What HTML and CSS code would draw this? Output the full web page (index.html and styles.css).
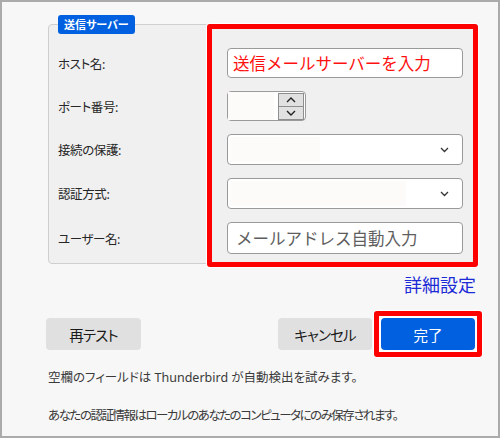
FILE: index.html
```html
<!DOCTYPE html>
<html lang="ja">
<head>
<meta charset="utf-8">
<title>送信サーバー</title>
<link rel="stylesheet" href="styles.css">
</head>
<body>
<div class="frame">
  <div class="group">
    <div class="legend">送信サーバー</div>
    <div class="rows">
      <label class="lbl">ホスト名:</label>
      <input class="field host" type="text" value="送信メールサーバーを入力">

      <label class="lbl">ポート番号:</label>
      <div class="port">
        <span class="blank port-blank"></span>
        <span class="fill"></span>
        <span class="spin">
          <span class="spin-btn"><svg width="10" height="6" viewBox="0 0 10 6"><path d="M1 5 L5 1 L9 5" fill="none" stroke="#222" stroke-width="1.4"/></svg></span>
          <span class="spin-btn"><svg width="10" height="6" viewBox="0 0 10 6"><path d="M1 1 L5 5 L9 1" fill="none" stroke="#222" stroke-width="1.4"/></svg></span>
        </span>
      </div>

      <label class="lbl">接続の保護:</label>
      <div class="select">
        <span class="blank sel-blank-1"></span>
        <svg class="chev" width="9" height="6" viewBox="0 0 9 6"><path d="M1 1 L4.5 4.5 L8 1" fill="none" stroke="#333" stroke-width="1.3"/></svg>
      </div>

      <label class="lbl">認証方式:</label>
      <div class="select">
        <span class="blank sel-blank-2"></span>
        <svg class="chev" width="9" height="6" viewBox="0 0 9 6"><path d="M1 1 L4.5 4.5 L8 1" fill="none" stroke="#333" stroke-width="1.3"/></svg>
      </div>

      <label class="lbl">ユーザー名:</label>
      <input class="field user" type="text" placeholder="メールアドレス自動入力">
    </div>
  </div>

  <div class="advanced">詳細設定</div>

  <div class="buttons">
    <button class="btn">再テスト</button>
    <span class="spacer"></span>
    <button class="btn">キャンセル</button>
    <span class="highlight"><button class="btn primary">完了</button></span>
  </div>

  <p class="note">空欄のフィールドは Thunderbird が自動検出を試みます。</p>
  <p class="note second">あなたの認証情報はローカルのあなたのコンピュータにのみ保存されます。</p>

  <div class="annotation"></div>
</div>
</body>
</html>
```

FILE: styles.css
```css
* { box-sizing: border-box; }

html, body {
  margin: 0;
  padding: 0;
  background: #f7f7f7;
}

body {
  font-family: "Noto Sans", "Noto Sans CJK JP", sans-serif;
  font-feature-settings: "palt";
  color: #1f1f1f;
}

.frame {
  position: relative;
  width: 500px;
  height: 438px;
  border: 2px solid #ababab;
  background: #f7f7f7;
  padding: 0 16px 0 44px;
  overflow: hidden;
}

.group {
  margin: 22px 8px 0 2px;
  border: 1px solid #cfcfcf;
  border-radius: 4px;
  background: #f0f0f0;
  padding: 0 10px 9px 9px;
}

.legend {
  width: fit-content;
  margin-top: -10px;
  height: 19px;
  line-height: 19px;
  padding: 0 6px;
  border-radius: 3px;
  background: #0060df;
  color: #fff;
  font-size: 11px;
  font-weight: bold;
}

.rows {
  margin-top: 14px;
  display: grid;
  grid-template-columns: 1fr 236px;
  grid-template-rows: 30px 30px 31px 31px 32px;
  row-gap: 13px;
  align-items: center;
}

.lbl {
  font-size: 12.5px;
  letter-spacing: -0.4px;
  color: #262626;
}

.field {
  display: block;
  width: 100%;
  height: 100%;
  margin: 0;
  border: 1px solid #9a9a9a;
  border-radius: 4px;
  background: #fff;
  font-family: "Noto Sans CJK JP", sans-serif;
  font-size: 16.5px;
  outline: none;
}

.host {
  color: #ff1010;
  padding: 0 0 1px 5px;
}

.user {
  padding: 0 0 1px 8px;
}

.user::placeholder {
  color: #5e5e5e;
  opacity: 1;
}

.port {
  width: 79px;
  height: 30px;
  border: 1px solid #9a9a9a;
  border-radius: 4px;
  background: #fff;
  display: flex;
  align-items: center;
  padding: 0 1px 0 0;
}

.blank {
  display: block;
  background: #fcfbf9;
}

.port-blank {
  width: 46px;
  align-self: stretch;
}

.fill { flex: 1; }

.spin {
  display: flex;
  flex-direction: column;
  width: 26px;
  height: 27px;
  border: 1px solid #8e8e8e;
  background: #e1e1e1;
}

.spin-btn {
  flex: 1;
  display: flex;
  align-items: center;
  justify-content: center;
}

.spin-btn + .spin-btn {
  border-top: 1px solid #8e8e8e;
}

.select {
  height: 100%;
  border: 1px solid #9a9a9a;
  border-radius: 4px;
  background: #fff;
  display: flex;
  align-items: center;
  justify-content: space-between;
  padding: 2px 13px 2px 2px;
}

.sel-blank-1 { width: 90px; align-self: stretch; }
.sel-blank-2 { width: 176px; align-self: stretch; }

.chev { display: block; }

.advanced {
  margin: 10px 6px 0 0;
  text-align: right;
  font-family: "Noto Sans CJK JP", sans-serif;
  font-size: 18px;
  line-height: 20px;
  color: #1d2bd6;
}

.buttons {
  margin-top: 17px;
  display: flex;
  align-items: center;
}

.spacer { flex: 1; }

.btn {
  width: 95px;
  height: 32px;
  margin: 0;
  border: none;
  border-radius: 4px;
  background: #e0e0e0;
  color: #1a1a1a;
  font-family: "Noto Sans CJK JP", sans-serif;
  font-feature-settings: "palt";
  font-size: 14.5px;
  letter-spacing: -0.8px;
  padding: 0;
}

.btn + .btn,
.spacer + .btn { width: 94px; margin-right: 2px; }

.highlight {
  display: block;
  border: 5px solid #ff0000;
  border-radius: 3px;
  padding: 2px;
  background: #fff;
  box-shadow: 0 0 0 1px #fff;
}

.btn.primary {
  display: block;
  width: 94px;
  margin: 0;
  background: #0060df;
  color: #fff;
  letter-spacing: 0;
}

.note {
  margin: 12px 0 0 2px;
  font-size: 12.5px;
  line-height: 18px;
  color: #3a3a3a;
}

.note.second {
  margin-top: 20px;
  letter-spacing: -1.5px;
}

.annotation {
  position: absolute;
  left: 205px;
  top: 22px;
  width: 271px;
  height: 243px;
  border: 5px solid #ff0000;
  border-radius: 3px;
  box-shadow: 0 0 0 1px #fff;
  pointer-events: none;
}
```
